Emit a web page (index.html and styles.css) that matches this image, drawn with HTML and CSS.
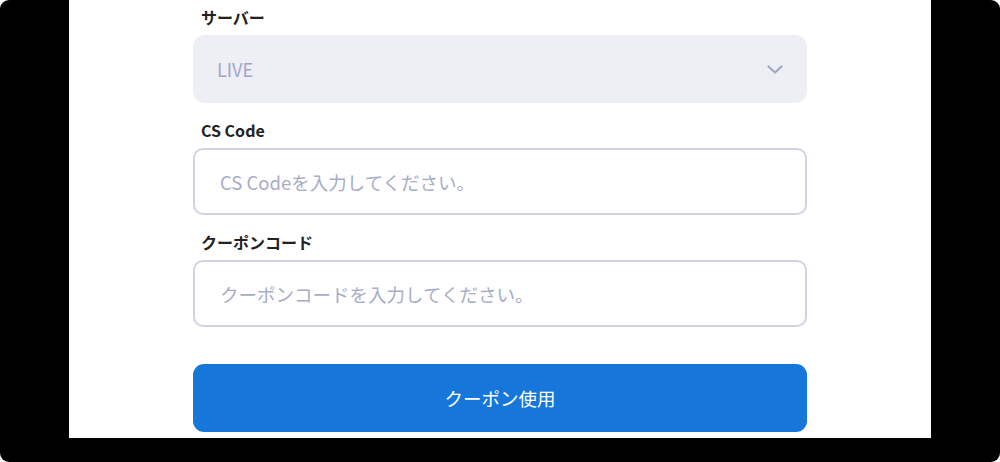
FILE: index.html
```html
<!DOCTYPE html>
<html lang="ja">
<head>
<meta charset="utf-8">
<link rel="stylesheet" href="styles.css">
</head>
<body>
<div class="screen">
  <div class="panel">
    <form class="form">
      <div class="field">
        <label class="label">サーバー</label>
        <div class="select">
          <span class="select-value">LIVE</span>
          <svg class="chevron" width="16" height="9" viewBox="0 0 16 9"><path d="M1.5 1.5 L8 7.5 L14.5 1.5" fill="none" stroke="#a0a6c8" stroke-width="2.2" stroke-linecap="round" stroke-linejoin="round"/></svg>
        </div>
      </div>
      <div class="field">
        <label class="label">CS Code</label>
        <div class="input"><span class="placeholder">CS Codeを入力してください。</span></div>
      </div>
      <div class="field">
        <label class="label">クーポンコード</label>
        <div class="input"><span class="placeholder">クーポンコードを入力してください。</span></div>
      </div>
      <div class="button">クーポン使用</div>
    </form>
  </div>
</div>
</body>
</html>
```

FILE: styles.css
```css
html, body {
  margin: 0;
  padding: 0;
  background: #ffffff;
}
body {
  font-family: "Noto Sans CJK JP", "Noto Sans", sans-serif;
  width: 1000px;
  height: 462px;
  overflow: hidden;
}
.screen {
  width: 1000px;
  height: 462px;
  background: #000000;
  border-radius: 9px;
  display: flex;
  justify-content: center;
  align-items: flex-start;
}
.panel {
  width: 862px;
  height: 438px;
  background: #ffffff;
  display: flex;
  justify-content: center;
}
.form {
  width: 614px;
  display: flex;
  flex-direction: column;
  padding-top: 5px;
}
.field {
  display: flex;
  flex-direction: column;
  margin-bottom: 15px;
}
.label {
  font-size: 16px;
  font-weight: 700;
  line-height: 24px;
  color: #222222;
  padding-left: 8px;
  margin-bottom: 6px;
}
.select {
  height: 68px;
  box-sizing: border-box;
  background: #eeeef5;
  border-radius: 12px;
  display: flex;
  align-items: center;
  justify-content: space-between;
  padding: 0 24px 0 24px;
}
.select-value {
  font-size: 18px;
  color: #a0a6c8;
}
.chevron {
  display: block;
}
.input {
  height: 67px;
  box-sizing: border-box;
  border: 2px solid #d3d1e2;
  border-radius: 10px;
  display: flex;
  align-items: center;
  padding-left: 25px;
}
.placeholder {
  font-size: 18.5px;
  color: #a7acc9;
}
.button {
  margin-top: 22px;
  height: 68px;
  background: #1776da;
  border-radius: 11px;
  color: #ffffff;
  font-size: 18.5px;
  display: flex;
  align-items: center;
  justify-content: center;
}
```
